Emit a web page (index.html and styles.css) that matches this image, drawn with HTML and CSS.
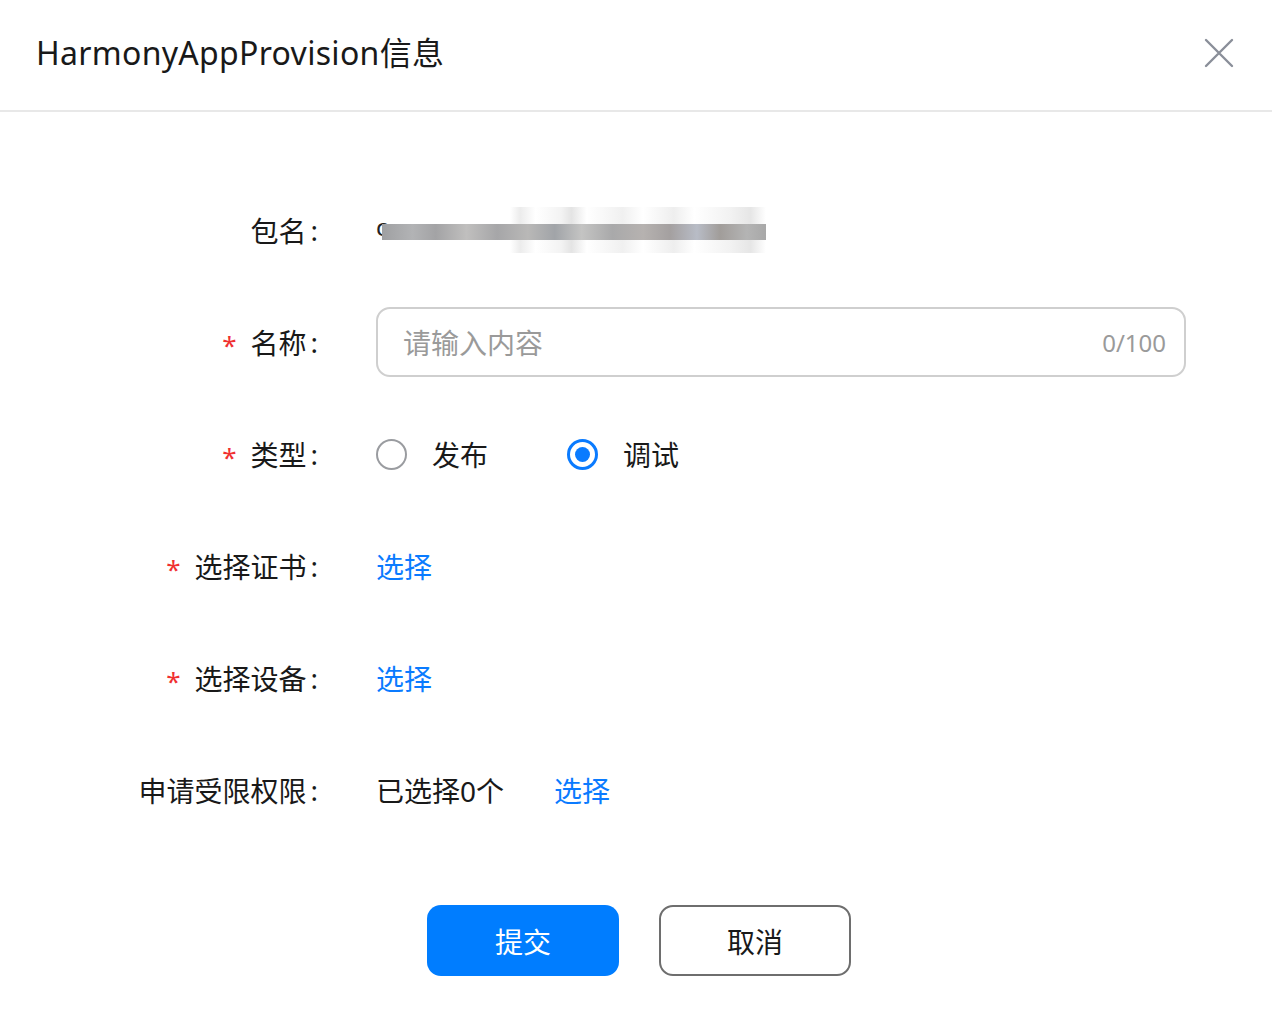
FILE: index.html
```html
<!DOCTYPE html>
<html lang="zh-CN">
<head>
<meta charset="utf-8">
<title>HarmonyAppProvision信息</title>
<link rel="stylesheet" href="styles.css">
</head>
<body>
<div class="dialog">
  <header class="header">
    <h1 class="title">HarmonyAppProvision信息</h1>
    <button class="close" aria-label="关闭">
      <svg width="32" height="32" viewBox="0 0 32 32"><path d="M3 3 L29 29 M29 3 L3 29" stroke="#8a8f99" stroke-width="2.4" stroke-linecap="round" fill="none"/></svg>
    </button>
  </header>
  <form class="form">
    <div class="row">
      <div class="label">包名<span class="colon">:</span></div>
      <div class="content">
        <span class="masked"><span class="mask-hi"></span><span class="mask-c">c</span><span class="mask-bar"></span></span>
      </div>
    </div>
    <div class="row">
      <div class="label"><span class="req">*</span>名称<span class="colon">:</span></div>
      <div class="content">
        <div class="input">
          <span class="placeholder">请输入内容</span>
          <span class="count">0/100</span>
        </div>
      </div>
    </div>
    <div class="row">
      <div class="label"><span class="req">*</span>类型<span class="colon">:</span></div>
      <div class="content radios">
        <label class="radio"><span class="circle"></span><span class="rtext">发布</span></label>
        <label class="radio checked"><span class="circle"></span><span class="rtext">调试</span></label>
      </div>
    </div>
    <div class="row">
      <div class="label"><span class="req">*</span>选择证书<span class="colon">:</span></div>
      <div class="content"><a class="link">选择</a></div>
    </div>
    <div class="row">
      <div class="label"><span class="req">*</span>选择设备<span class="colon">:</span></div>
      <div class="content"><a class="link">选择</a></div>
    </div>
    <div class="row">
      <div class="label">申请受限权限<span class="colon">:</span></div>
      <div class="content"><span class="selected">已选择0个</span><a class="link">选择</a></div>
    </div>
    <div class="actions">
      <button type="button" class="btn primary">提交</button>
      <button type="button" class="btn ghost">取消</button>
    </div>
  </form>
</div>
</body>
</html>
```
FILE: styles.css
```css
* { box-sizing: border-box; }
html, body { margin: 0; padding: 0; background: #fff; }
body {
  font-family: "Noto Sans", "Noto Sans CJK SC", sans-serif;
  color: #191919;
}
.dialog { width: 1272px; }
.header {
  height: 112px;
  border-bottom: 2px solid #e8e8e8;
  display: flex;
  align-items: center;
  justify-content: space-between;
  padding: 0 36px 9px 36px;
}
.title {
  margin: 0;
  font-weight: 400;
  font-size: 32px;
  letter-spacing: 0.3px;
  color: #191919;
}
.close {
  border: 0;
  background: none;
  padding: 0;
  width: 32px;
  height: 32px;
  margin-right: 1px;
  margin-bottom: -5px;
  cursor: pointer;
}
.close svg { display: block; }
.form {
  padding-top: 83px;
  display: flex;
  flex-direction: column;
  gap: 42px;
}
.row {
  display: grid;
  grid-template-columns: 318px 810px;
  column-gap: 58px;
  height: 70px;
  align-items: center;
}
.label {
  font-size: 28px;
  text-align: right;
  white-space: nowrap;
  display: flex;
  justify-content: flex-end;
  align-items: center;
}
.colon { padding-left: 4px; }
.req {
  color: #f03030;
  font-size: 26px;
  margin-right: 14px;
  position: relative;
  top: 3px;
}
.content {
  font-size: 28px;
  display: flex;
  align-items: center;
}
.masked {
  position: relative;
  display: inline-block;
  width: 392px;
  height: 46px;
}
.mask-c {
  position: absolute;
  left: 0;
  top: 8px;
  font-size: 24px;
  line-height: 24px;
  color: #222;
}
.mask-bar {
  position: absolute;
  left: 6px;
  top: 17px;
  width: 384px;
  height: 16px;
  background: linear-gradient(90deg, #9fa0a2 0%, #b2b3b5 8%, #a3a3a5 14%, #c0bfbe 22%, #a6a6a8 30%, #b9b8b7 38%, #a1a4a8 45%, #c4c4c3 52%, #a9a9aa 60%, #b6b2b0 68%, #a4a0a0 75%, #b8bcc6 82%, #a19d9a 88%, #b4b4b4 95%, #a8a8a8 100%);
}
.mask-hi {
  position: absolute;
  left: 134px;
  top: 0;
  width: 256px;
  height: 46px;
  background: linear-gradient(90deg, #ffffff 0%, #ececec 4%, #ffffff 10%, #f3f3f3 20%, #e4e4e4 24%, #ffffff 30%, #f0f0f0 44%, #ffffff 52%, #eeeeee 64%, #ffffff 72%, #f2f2f2 86%, #e6e6e6 94%, #ffffff 100%);
}
.input {
  width: 810px;
  height: 70px;
  border: 2px solid #cfcfcf;
  border-radius: 14px;
  display: flex;
  align-items: center;
  justify-content: space-between;
  padding: 0 18px 0 25px;
}
.placeholder { color: #9a9a9a; font-size: 28px; }
.count { color: #9a9a9a; font-size: 24px; }
.radios { gap: 0; }
.radio {
  display: flex;
  align-items: center;
  width: 191px;
}
.circle {
  width: 31px;
  height: 31px;
  border-radius: 50%;
  border: 2px solid #9a9ca0;
  margin-right: 25px;
  position: relative;
  flex: none;
}
.radio.checked .circle { border: 3px solid #0a7bff; }
.radio.checked .circle::after {
  content: "";
  position: absolute;
  left: 50%;
  top: 50%;
  width: 15px;
  height: 15px;
  margin: -7.5px 0 0 -7.5px;
  border-radius: 50%;
  background: #0a7bff;
}
.rtext { font-size: 28px; }
.link { color: #0a7bff; font-size: 28px; cursor: pointer; }
.selected { margin-right: 50px; }
.actions {
  margin-top: 38px;
  display: flex;
  justify-content: center;
  gap: 40px;
  padding-left: 6px;
}
.btn {
  width: 192px;
  height: 71px;
  border-radius: 14px;
  font-family: inherit;
  font-size: 28px;
  cursor: pointer;
}
.btn.primary { background: #007dff; color: #fff; border: 0; }
.btn.ghost { background: #fff; color: #191919; border: 2px solid #6e6e6e; }
```
